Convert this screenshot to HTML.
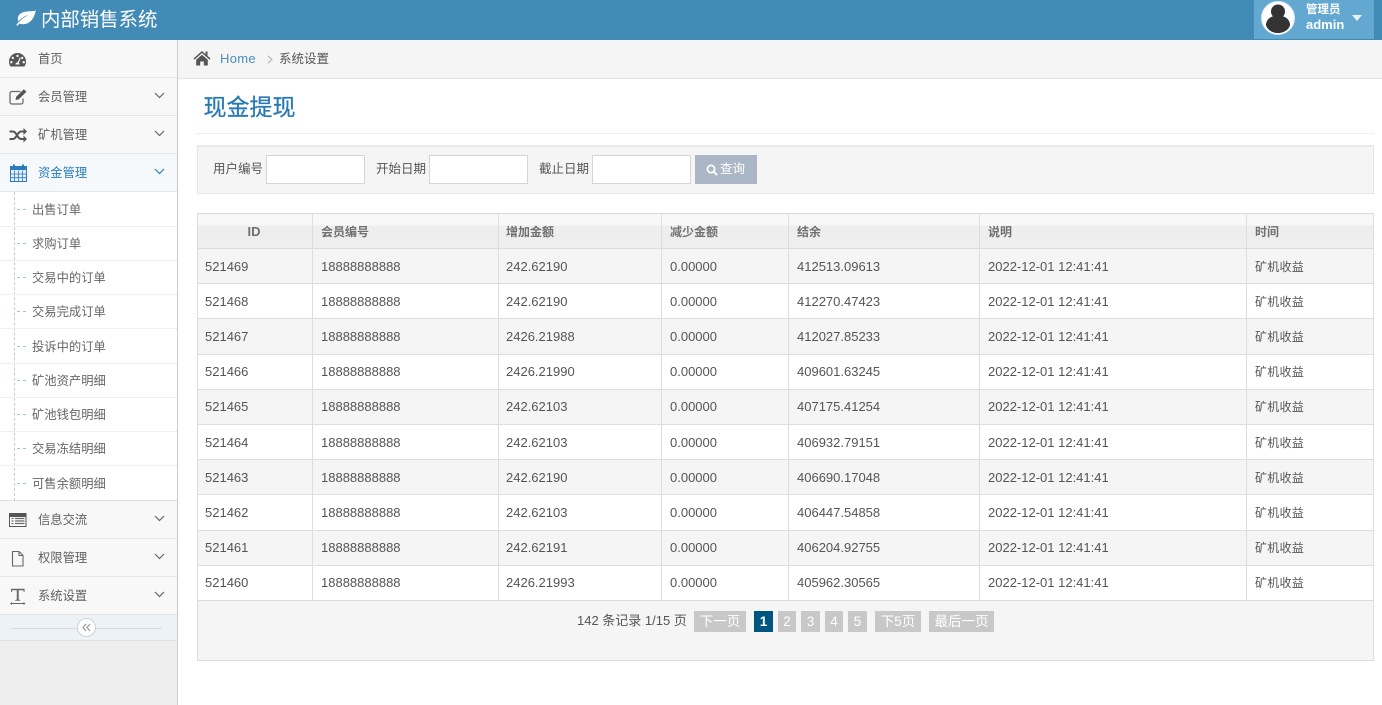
<!DOCTYPE html>
<html lang="zh"><head><meta charset="utf-8"><title>内部销售系统</title>
<style>
*{box-sizing:border-box}
html,body{margin:0;padding:0;width:1382px;height:705px;overflow:hidden;background:#fff;font-family:"Liberation Sans","Noto Sans CJK SC",sans-serif;font-size:12.5px;color:#555}
.a{position:absolute}
#nav{left:0;top:0;width:1382px;height:40px;background:#428bb7}
#brand{left:41px;top:7px;font-size:19.4px;line-height:26px;color:#fff;white-space:nowrap}
#user{left:1254px;top:0;width:120px;height:39px;background:#62a8d1;color:#fff}
#side{left:0;top:40px;width:178px;height:665px;background:#eee;border-right:1px solid #ccc}
.m{position:absolute;left:0;width:177px;height:38px;background:#f8f8f8;border-bottom:1px solid #e5e5e5;color:#606060;font-size:12.3px;line-height:38px;padding-left:38px}
.m svg.i{position:absolute;left:9px;top:10px}
.m svg.c{position:absolute;left:154px;top:14px}
.m.on{background:#f5f9fc;color:#2b7dbc}
#sub{left:0;top:192px;width:177px;height:309px;background:#fff;border-bottom:1px solid #e0e0e0}
#sub div.s{position:absolute;left:0;width:177px;height:35px;border-bottom:1px dotted #e4e4e4;color:#666;line-height:36px;padding-left:32px;font-size:12.3px}
#sub div.s:before{content:"";position:absolute;left:17px;top:17px;width:9px;border-top:1px dashed #9dc5e0}
#sub .v{position:absolute;left:14px;top:0;height:309px;border-left:1px dashed #b4d3e8}
#crumb{left:178px;top:40px;width:1204px;height:39px;background:#f5f5f5;border-bottom:1px solid #e5e5e5}
h1{position:absolute;left:203.500px;top:92px;margin:0;font-size:23px;line-height:30px;font-weight:400;color:#2679b5;-webkit-text-stroke:.25px #2679b5}
#hr{left:197px;top:133px;width:1177px;border-top:1px dotted #e2e2e2}
#filter{left:197px;top:145px;width:1177px;height:49px;background:#f5f5f5;border:1px solid #e5e5e5;border-top:2px solid #e9e9e9}
.l{position:absolute;top:161px;line-height:16px;color:#555;white-space:nowrap}
.inp{position:absolute;top:155px;width:99px;height:29px;background:#fff;border:1px solid #d5d5d5}
#btn{left:695px;top:155px;width:62px;height:29px;background:#abb6c7;color:#fff;line-height:29px;padding-left:25px;font-size:12.5px}
table{position:absolute;left:197px;top:213px;width:1176px;border-collapse:collapse;table-layout:fixed}
td,th{border:1px solid #ddd;padding:0 0 0 8px;font-size:12px;font-weight:400;height:35.2px;text-align:left;color:#555;overflow:hidden;white-space:nowrap}
th{height:35px;font-weight:700;color:#707070;background:linear-gradient(#f8f8f8 0,#f8f8f8 30%,#eeeeee 34%,#efefef 100%)}
td.n{font-size:13px}
td.t{letter-spacing:.25px}
td:first-child{padding-left:7px}
td:nth-child(3),th:nth-child(3){padding-left:7px}
tr.o td{background:#f5f5f5}
#foot{left:197px;top:600px;width:1177px;height:61px;background:#f5f5f5;border:1px solid #ddd}
.p{position:absolute;top:611px;height:21px;background:#c8c8c8;color:#fff;font-size:13.500px;line-height:21px;text-align:center}
</style></head><body>
<div class="a" id="nav"></div>
<svg class="a" style="left:16px;top:10px" width="20" height="16" viewBox="0 0 20 16"><path d="M19.800.4C19 .9 17.400 1.200 14.500 1.300 8.500 1.500 3 2.500 1.900 7.800c-.3 1.500 0 2.800.5 3.500C5.300 8 9 5.800 13.200 4.600 9.500 6.300 5.500 8.800 1.600 13.300L.2 15l1.400.8L3.300 13.500c2 .9 5.400 1.300 9-.6 4.500-2.400 6.500-7.500 7.500-12.500z" fill="#fff"/></svg>
<div class="a" id="brand">内部销售系统</div>
<div class="a" id="user"></div>
<svg class="a" style="left:1261px;top:1px" width="34" height="34" viewBox="0 0 34 34"><circle cx="17" cy="17" r="16.500" fill="#fff" stroke="#dceaf3" stroke-width="1"/><circle cx="17" cy="10.500" r="7" fill="#333"/><path d="M17 14c-6 1-11 3-12 9-.5 3 4 9 12 9s12.500-6 12-9c-1-6-6-8-12-9z" fill="#333"/></svg>
<div class="a" style="left:1306px;top:3px;color:#fff;font-size:11.500px;line-height:14px;white-space:nowrap;font-weight:700">管理员</div>
<div class="a" style="left:1306px;top:18px;color:#fff;font-size:13px;line-height:14px;white-space:nowrap;font-weight:700">admin</div>
<svg class="a" style="left:1352px;top:15px" width="10" height="6" viewBox="0 0 10 6"><path d="M0 0h10L5 6z" fill="#eaf2f8"/></svg>

<div class="a" id="side"></div>
<div class="m" style="top:40px">首页<svg class="i" style="left:8px" width="19" height="20" viewBox="0 0 19 20"><path fill-rule="evenodd" d="M9.500 3C4.500 3 1 7 1 11.500c0 1.800.4 3.200 1.200 4.500.300.400.600.500 1 .5h12.600c.4 0 .7-.1 1-.5.800-1.300 1.200-2.700 1.200-4.500C18 7 14.500 3 9.500 3zM9.500 4.700a1.200 1.200 0 110 2.400 1.200 1.200 0 010-2.400zM4.800 6.700a1.200 1.200 0 110 2.400 1.200 1.200 0 010-2.400zM14.200 6.700a1.200 1.200 0 110 2.400 1.200 1.200 0 010-2.400zM3.300 11a1.200 1.200 0 110 2.400 1.200 1.200 0 010-2.400zM15.700 11a1.200 1.200 0 110 2.400 1.200 1.200 0 010-2.400zM11.800 7.500l1 .4-2 5.100c.5.400.8 1 .8 1.500H7.400c0-1.200 1-2.100 2.300-2.100z" fill="#555"/></svg></div>
<div class="m" style="top:78px">会员管理<svg class="i" style="left:9px;top:9px" width="19" height="20" viewBox="0 0 19 20"><path d="M14 11.500V15c0 1.200-.9 2-2 2H3c-1.100 0-2-.8-2-2V6.500c0-1.200.9-2 2-2h8.500" fill="none" stroke="#6a6a6a" stroke-width="1.300"/><path d="M6.500 13l.7-3.200L14.800 2.200l2.600 2.600-7.600 7.600z" fill="#555"/></svg><svg class="c" width="11" height="7" viewBox="0 0 11 7"><path d="M1 1l4.500 4.500L10 1" fill="none" stroke="#666" stroke-width="1.200"/></svg></div>
<div class="m" style="top:116px">矿机管理<svg class="i" style="top:9px" width="19" height="20" viewBox="0 0 19 20"><path d="M.5 6.500h3.500c3.500 0 4.500 7.500 8 7.500h3M.5 14H4c3.500 0 4.500-7.500 8-7.500h3" fill="none" stroke="#555" stroke-width="2"/><path d="M14.500 3L18 6.500l-3.500 3.500zM14.500 10.500L18 14l-3.500 3.500z" fill="#555"/></svg><svg class="c" width="11" height="7" viewBox="0 0 11 7"><path d="M1 1l4.500 4.500L10 1" fill="none" stroke="#666" stroke-width="1.200"/></svg></div>
<div class="m on" style="top:154px">资金管理<svg class="i" style="left:10px;top:10px" width="17" height="18" viewBox="0 0 17 18"><path d="M.5 2.500h16V17.500H.5z" fill="#e6eff7" stroke="#2b7dbc"/><path d="M.5 2.500h16v3.500H.5z" fill="#2b7dbc"/><path d="M3 .5h2v4H3zM12 .5h2v4h-2z" fill="#2b7dbc"/><path d="M.5 10h16M.5 13.700h16M4.500 6.500V17.500M8.500 6.500V17.500M12.500 6.500V17.500" stroke="#2b7dbc" stroke-width=".8" fill="none"/></svg><svg class="c" width="11" height="7" viewBox="0 0 11 7"><path d="M1 1l4.500 4.500L10 1" fill="none" stroke="#2b7dbc" stroke-width="1.200"/></svg></div>
<div class="a" id="sub"><div class="v"></div>
<div class="s" style="top:0">出售订单</div>
<div class="s" style="top:34px">求购订单</div>
<div class="s" style="top:68px">交易中的订单</div>
<div class="s" style="top:102px">交易完成订单</div>
<div class="s" style="top:137px">投诉中的订单</div>
<div class="s" style="top:171px">矿池资产明细</div>
<div class="s" style="top:205px">矿池钱包明细</div>
<div class="s" style="top:239px">交易冻结明细</div>
<div class="s" style="top:274px;border-bottom:0">可售余额明细</div>
</div>
<div class="m" style="top:501px">信息交流<svg class="i" style="top:9px" width="19" height="20" viewBox="0 0 19 20"><path d="M.5 3.500h16.500v13H.5z" fill="#fff" stroke="#555"/><path d="M.5 3.500h16.500v3H.5z" fill="#555" stroke="#555"/><path d="M2.500 8.500h2M2.500 11h2M2.500 13.500h2M6 8.500h9.500M6 11h9.500M6 13.500h9.500" stroke="#666" stroke-width="1.300" fill="none"/></svg><svg class="c" width="11" height="7" viewBox="0 0 11 7"><path d="M1 1l4.500 4.500L10 1" fill="none" stroke="#666" stroke-width="1.200"/></svg></div>
<div class="m" style="top:539px">权限管理<svg class="i" style="left:9px;top:10px" width="19" height="20" viewBox="0 0 19 20"><path d="M3.500 2.500h6.500l4 4v10.500H3.500zM10 2.500v4h4" fill="none" stroke="#666" stroke-width="1.100"/></svg><svg class="c" width="11" height="7" viewBox="0 0 11 7"><path d="M1 1l4.500 4.500L10 1" fill="none" stroke="#666" stroke-width="1.200"/></svg></div>
<div class="m" style="top:577px;height:38px">系统设置<svg class="i" style="left:9px;top:9px" width="19" height="20" viewBox="0 0 19 20"><path d="M2 6V2.800h13.500V6h-.7l-.5-1.800H9.700v9.300l1.600.5v.7H6.200v-.7l1.600-.5V4.200H3.200L2.700 6z" fill="#666"/><path d="M1.500 17.500h14.500" stroke="#666" fill="none"/><path d="M1 17.500l2-1.500v3zM16.500 17.500l-2-1.500v3z" fill="#666"/></svg><svg class="c" width="11" height="7" viewBox="0 0 11 7"><path d="M1 1l4.500 4.500L10 1" fill="none" stroke="#666" stroke-width="1.200"/></svg></div>
<div class="a" style="left:0;top:615px;width:177px;height:26px;background:#edf2f6;border-bottom:1px solid #e0e0e0"></div>
<div class="a" style="left:11px;top:628px;width:151px;border-top:1px solid #d5dde3"></div>
<svg class="a" style="left:77px;top:618px" width="19" height="19" viewBox="0 0 19 19"><circle cx="9.500" cy="9.500" r="9" fill="#fff" stroke="#d0d0d0"/><path d="M9 6L6 9.500 9 13M13 6l-3 3.500 3 3.500" fill="none" stroke="#999" stroke-width="1.200"/></svg>

<div class="a" id="crumb"></div>
<svg class="a" style="left:193px;top:50px" width="18" height="16" viewBox="0 0 18 16"><path d="M9 1L.5 8.500l1 1.100L9 3l7.500 6.600 1-1.100-3-2.600V1.500h-2v2.700z" fill="#555"/><path d="M3.200 9.800L9 4.700l5.800 5.100V15.500h-4v-4h-3.600v4h-4z" fill="#555"/></svg>
<div class="a" style="left:220px;top:51px;font-size:13px;line-height:16px;color:#4c8fbd;letter-spacing:.3px">Home</div>
<svg class="a" style="left:267px;top:55px" width="6" height="9" viewBox="0 0 6 9"><path d="M1 .8L5 4.500 1 8.200" fill="none" stroke="#b5b5b5" stroke-width="1.100"/></svg>
<div class="a" style="left:279px;top:51px;line-height:16px;color:#555">系统设置</div>

<h1>现金提现</h1>
<div class="a" id="hr"></div>
<div class="a" id="filter"></div>
<div class="l" style="left:213px">用户编号</div><div class="inp" style="left:266px"></div>
<div class="l" style="left:376px">开始日期</div><div class="inp" style="left:429px"></div>
<div class="l" style="left:539px">截止日期</div><div class="inp" style="left:592px"></div>
<div class="a" id="btn">查询</div>
<svg class="a" style="left:706px;top:164px" width="12" height="12" viewBox="0 0 12 12"><circle cx="5" cy="5" r="3.600" fill="none" stroke="#fff" stroke-width="1.700"/><path d="M7.800 7.800L11 11" stroke="#fff" stroke-width="2"/></svg>

<table>
<colgroup><col style="width:115px"><col style="width:186px"><col style="width:163px"><col style="width:127px"><col style="width:191px"><col style="width:267px"><col style="width:127px"></colgroup>
<tr><th style="text-align:center;padding:0 2px 0 0;font-size:13px">ID</th><th>会员编号</th><th>增加金额</th><th>减少金额</th><th>结余</th><th>说明</th><th>时间</th></tr>
<tr class="o"><td class="n">521469</td><td class="n">18888888888</td><td class="n">242.62190</td><td class="n">0.00000</td><td class="n">412513.09613</td><td class="n">2022-12-01 12:41:41</td><td class="t">矿机收益</td></tr>
<tr><td class="n">521468</td><td class="n">18888888888</td><td class="n">242.62190</td><td class="n">0.00000</td><td class="n">412270.47423</td><td class="n">2022-12-01 12:41:41</td><td class="t">矿机收益</td></tr>
<tr class="o"><td class="n">521467</td><td class="n">18888888888</td><td class="n">2426.21988</td><td class="n">0.00000</td><td class="n">412027.85233</td><td class="n">2022-12-01 12:41:41</td><td class="t">矿机收益</td></tr>
<tr><td class="n">521466</td><td class="n">18888888888</td><td class="n">2426.21990</td><td class="n">0.00000</td><td class="n">409601.63245</td><td class="n">2022-12-01 12:41:41</td><td class="t">矿机收益</td></tr>
<tr class="o"><td class="n">521465</td><td class="n">18888888888</td><td class="n">242.62103</td><td class="n">0.00000</td><td class="n">407175.41254</td><td class="n">2022-12-01 12:41:41</td><td class="t">矿机收益</td></tr>
<tr><td class="n">521464</td><td class="n">18888888888</td><td class="n">242.62103</td><td class="n">0.00000</td><td class="n">406932.79151</td><td class="n">2022-12-01 12:41:41</td><td class="t">矿机收益</td></tr>
<tr class="o"><td class="n">521463</td><td class="n">18888888888</td><td class="n">242.62190</td><td class="n">0.00000</td><td class="n">406690.17048</td><td class="n">2022-12-01 12:41:41</td><td class="t">矿机收益</td></tr>
<tr><td class="n">521462</td><td class="n">18888888888</td><td class="n">242.62103</td><td class="n">0.00000</td><td class="n">406447.54858</td><td class="n">2022-12-01 12:41:41</td><td class="t">矿机收益</td></tr>
<tr class="o"><td class="n">521461</td><td class="n">18888888888</td><td class="n">242.62191</td><td class="n">0.00000</td><td class="n">406204.92755</td><td class="n">2022-12-01 12:41:41</td><td class="t">矿机收益</td></tr>
<tr><td class="n">521460</td><td class="n">18888888888</td><td class="n">2426.21993</td><td class="n">0.00000</td><td class="n">405962.30565</td><td class="n">2022-12-01 12:41:41</td><td class="t">矿机收益</td></tr>
</table>
<div class="a" id="foot"></div>
<div class="a" style="left:577px;top:612px;font-size:13px;line-height:18px;color:#555;white-space:nowrap">142 条记录 1/15 页</div>
<div class="p" style="left:694px;width:52px">下一页</div>
<div class="p" style="left:754px;width:19px;background:#005580;font-weight:700">1</div>
<div class="p" style="left:778px;width:18px">2</div>
<div class="p" style="left:801px;width:19px">3</div>
<div class="p" style="left:825px;width:18px">4</div>
<div class="p" style="left:848px;width:19px">5</div>
<div class="p" style="left:875px;width:46px">下5页</div>
<div class="p" style="left:929px;width:65px">最后一页</div>
</body></html>
